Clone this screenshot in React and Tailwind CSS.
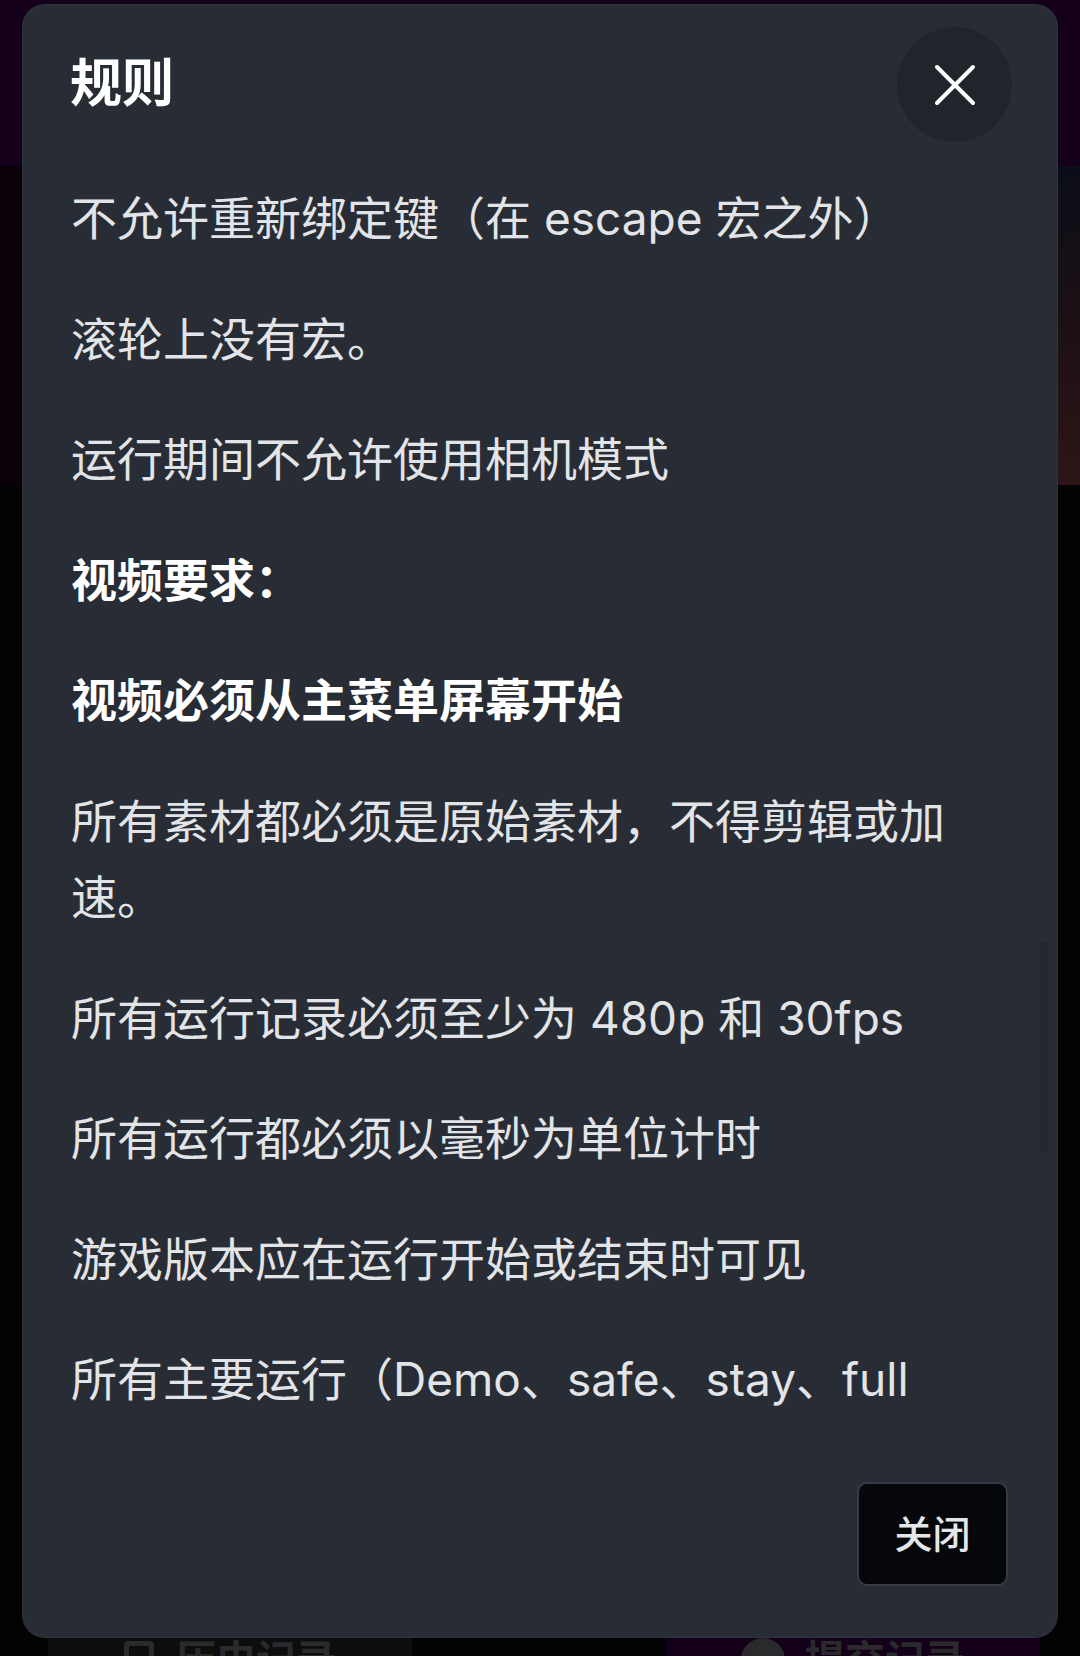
import React from "react";

const rules = [
  { text: "不允许重新绑定键（在 escape 宏之外）" },
  { text: "滚轮上没有宏。" },
  { text: "运行期间不允许使用相机模式" },
  { text: "视频要求：", bold: true },
  { text: "视频必须从主菜单屏幕开始", bold: true },
  { text: "所有素材都必须是原始素材，不得剪辑或加速。" },
  { text: "所有运行记录必须至少为 480p 和 30fps" },
  { text: "所有运行都必须以毫秒为单位计时" },
  { text: "游戏版本应在运行开始或结束时可见" },
  { text: "所有主要运行（Demo、safe、stay、full game）都必须提交视频证明" },
  { text: "违反规则的记录将被拒绝" },
];

export default function App() {
  return (
    <div className="relative w-[1080px] h-[1656px] overflow-hidden bg-[#030303] font-['Inter','Noto_Sans_CJK_SC',sans-serif]">
      {/* background page */}
      <div className="flex flex-col h-full">
        <div className="h-[166px] bg-[#14001b]" />
        <div className="h-[319px] flex">
          <div className="flex-1 bg-[#0a0008]" />
          <div className="w-[90px] bg-gradient-to-b from-[#0b0d18] via-[#1c1014] to-[#2d1517]" />
        </div>
        <div className="flex-1" />
        <div className="h-[46px] flex justify-between pl-[48px] pr-[40px]">
          <div className="w-[364px] h-[100px] bg-[#0d0d0e] rounded-[14px] flex items-center justify-center gap-[22px] text-[#2a2a2d] text-[40px] font-semibold">
            <div className="w-[30px] h-[38px] rounded-[4px] border-[5px] border-[#2a2a2d]" />
            <span>历史记录</span>
          </div>
          <div className="w-[374px] h-[100px] bg-[#150019] rounded-[14px] flex items-center justify-center gap-[20px] text-[#2a2a2d] text-[40px] font-semibold">
            <div className="w-[44px] h-[44px] rounded-full bg-[#2a2a2d]" />
            <span>提交记录</span>
          </div>
        </div>
      </div>

      {/* modal */}
      <div className="absolute inset-0">
        <div className="absolute left-[23px] top-[5px] w-[1034px] h-[1632px] rounded-[22px] bg-[#282d35] flex flex-col overflow-hidden shadow-[0_0_0_1px_#30353d]">
          {/* header */}
          <div className="flex items-center justify-between pt-[22px] pl-[47px] pr-[45px]">
            <h2 className="text-[52px] font-bold text-white leading-none pb-[2px]">规则</h2>
            <button className="w-[115px] h-[115px] rounded-full bg-[#20252c] flex items-center justify-center">
              <svg width="42" height="42" viewBox="0 0 42 42" fill="none">
                <path d="M3 3L39 39M39 3L3 39" stroke="#ffffff" strokeWidth="4" strokeLinecap="round" />
              </svg>
            </button>
          </div>

          {/* body */}
          <div className="relative h-[1278px] overflow-hidden">
            <div className="pt-[38px] pl-[48px] pr-[48px] flex flex-col gap-[44.6px]">
              {rules.map((r, i) => (
                <p
                  key={i}
                  className={
                    r.bold
                      ? "text-[46px] leading-[76px] font-bold text-white"
                      : "text-[46px] leading-[76px] text-[#e2e4e7]"
                  }
                >
                  {r.text}
                </p>
              ))}
            </div>
            <div className="absolute right-[9px] top-[800px] w-[8px] h-[210px] rounded-full bg-[#22272e]" />
          </div>

          {/* footer */}
          <div className="flex justify-end pt-[62px] pr-[49px]">
            <button className="w-[151px] h-[104px] rounded-[10px] bg-[#05070a] border-2 border-[#363b43] text-[38px] font-medium text-[#e4e6e9]">
              关闭
            </button>
          </div>
        </div>
      </div>
    </div>
  );
}
